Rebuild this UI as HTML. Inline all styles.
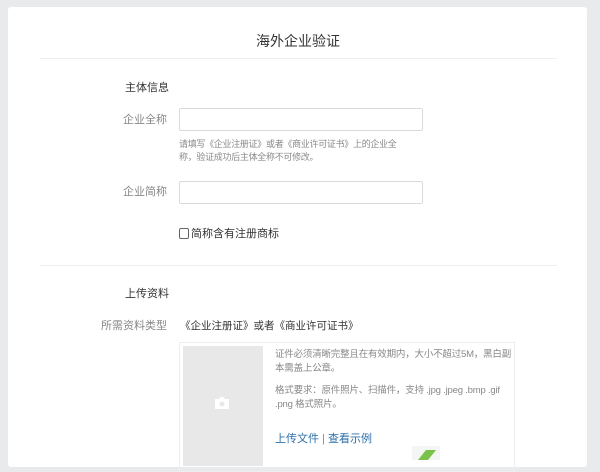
<!DOCTYPE html><html><head><meta charset="utf-8"><style>
*{margin:0;padding:0;box-sizing:border-box}
body{width:600px;height:458px;overflow:hidden;background:#e9eaec;font-family:"Liberation Sans","Noto Sans CJK SC",sans-serif;position:relative}
.card{position:absolute;left:8px;top:7px;width:579px;height:460px;background:#fff;border-radius:3px}
.a{position:absolute;white-space:nowrap}
.hr{position:absolute;left:40px;width:517px;height:1px;background:#eceef0}
.lab{position:absolute;right:433px;font-size:11px;line-height:14px;color:#888;text-align:right}
.inp{position:absolute;left:179px;width:244px;height:23px;border:1px solid #d9dadc;border-radius:2px}
</style></head><body><div class="card"></div>
<div class="a" style="left:0;width:596px;text-align:center;top:32px;font-size:14px;line-height:18px;color:#333">海外企业验证</div>
<div class="hr" style="top:58px"></div>
<div class="a" style="left:125px;top:81px;font-size:11px;line-height:14px;color:#333">主体信息</div>
<div class="lab" style="top:113px">企业全称</div>
<div class="inp" style="top:108px"></div>
<div class="a" style="left:179px;top:138px;font-size:9px;line-height:13px;color:#888;letter-spacing:-0.3px">请填写《企业注册证》或者《商业许可证书》上的企业全<br>称，验证成功后主体全称不可修改。</div>
<div class="lab" style="top:185px">企业简称</div>
<div class="inp" style="top:181px"></div>
<div class="a" style="left:179px;top:228px;width:10px;height:11px;border:1px solid #666;border-radius:2px"></div>
<div class="a" style="left:191px;top:227px;font-size:11px;line-height:14px;color:#333">简称含有注册商标</div>
<div class="hr" style="top:265px"></div>
<div class="a" style="left:125px;top:287px;font-size:11px;line-height:14px;color:#333">上传资料</div>
<div class="lab" style="top:319px">所需资料类型</div>
<div class="a" style="left:180px;top:319px;font-size:10.5px;line-height:14px;color:#333">《企业注册证》或者《商业许可证书》</div>
<div class="a" style="left:179px;top:342px;width:336px;height:130px;border:1px solid #eceef0"></div>
<div class="a" style="left:183px;top:346px;width:80px;height:120px;background:#e8e8e8"></div>
<svg class="a" style="left:214px;top:396px" width="16" height="14" viewBox="0 0 16 14"><path d="M1 3h4l1.5-2h3L11 3h4v10H1z" fill="#fff"/><circle cx="8" cy="8" r="2.5" fill="#e8e8e8"/></svg>
<div class="a" style="left:275px;top:348px;font-size:9.5px;line-height:14px;color:#888;letter-spacing:-0.2px">证件必须清晰完整且在有效期内，大小不超过5M，黑白副<br>本需盖上公章。</div>
<div class="a" style="left:275px;top:384px;font-size:9.5px;line-height:14px;color:#888;letter-spacing:-0.2px">格式要求：原件照片、扫描件，支持 .jpg .jpeg .bmp .gif<br>.png 格式照片。</div>
<div class="a" style="left:275px;top:432px;font-size:11px;line-height:14px;color:#2d6fa8">上传文件 <span style="color:#888">|</span> 查看示例</div>
<svg class="a" style="left:410px;top:446px" width="34" height="14"><rect x="2" y="0" width="28" height="14" fill="#f3f6f3"/><path d="M8 14L16 4h10L18 14z" fill="#7bc24a"/></svg>
</body></html>
